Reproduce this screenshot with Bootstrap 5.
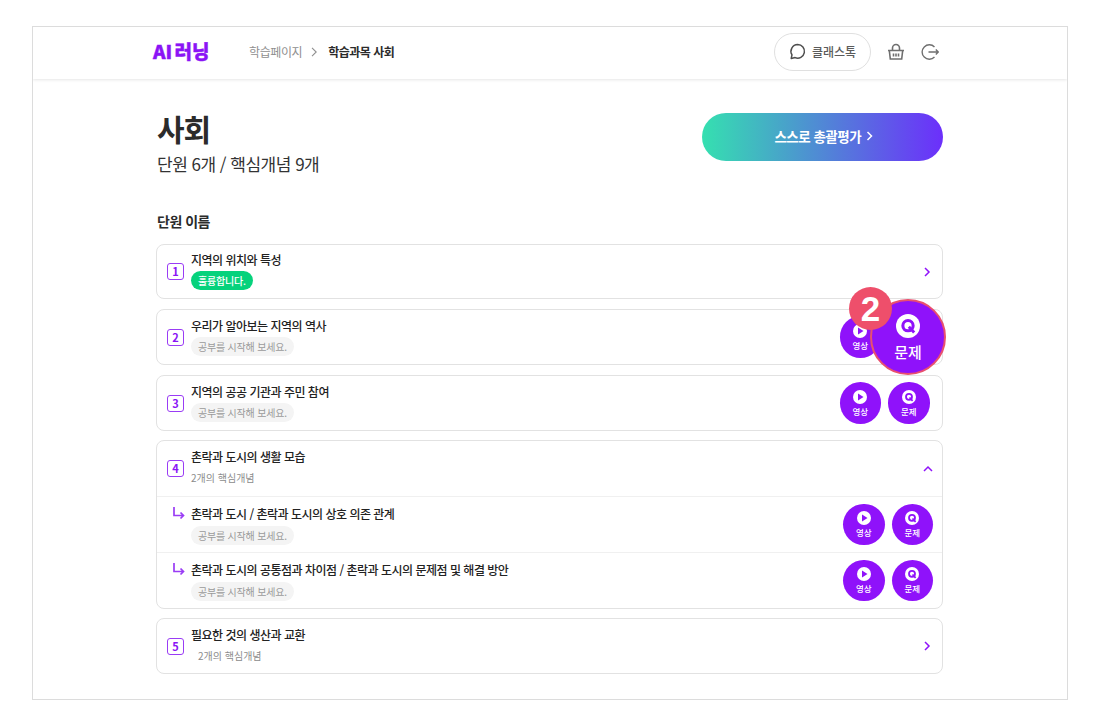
<!DOCTYPE html>
<html lang="ko">
<head>
  <meta charset="UTF-8" />
  <meta name="viewport" content="width=device-width, initial-scale=1.0"/>
  <title>AI 러닝</title>
  <link href="https://cdn.jsdelivr.net/npm/bootstrap@5.3.3/dist/css/bootstrap.min.css" rel="stylesheet"/>
  <style>
    body {
      font-family: "Noto Sans CJK KR", "Noto Sans", sans-serif;
      background: #fff;
      color: #222;
      padding: 26px 32px;
    }
    .frame {
      border: 1px solid #dcdcdc;
      height: 674px;
      overflow: hidden;
    }
    .topbar {
      height: 52px;
      padding: 0 128px 3px 120px;
      box-shadow: 0 1px 3px rgba(0, 0, 0, 0.1);
    }
    .logo {
      color: #8b14f5;
      font-size: 19px;
      font-weight: 900;
      word-spacing: -3px;
      -webkit-text-stroke: 0.4px #8b14f5;
      width: 96px;
    }
    .crumb-a { color: #8f8f8f; font-size: 12px; letter-spacing: -0.4px; }
    .crumb-b { color: #2b2b2b; font-size: 12px; font-weight: 700; letter-spacing: -0.5px; margin-left: 2px; }
    .talk-btn {
      height: 38px;
      width: 97px;
      border: 1px solid #e0e0e0;
      border-radius: 19px;
      color: #5b5b5b;
      font-size: 12px;
      font-weight: 500;
      gap: 6px;
      margin-right: 16px;
    }
    .main-area {
      padding: 34px 124px 0 123px;
    }
    .page-title {
      font-size: 30px;
      font-weight: 700;
      line-height: 30px;
      letter-spacing: -1px;
      color: #2b2b2b;
      margin: 0;
      padding-left: 1px;
    }
    .page-sub {
      font-size: 17px;
      line-height: 26px;
      letter-spacing: -0.5px;
      color: #333;
      margin-top: 8px;
      padding-left: 1px;
    }
    .grad-btn {
      width: 241.5px;
      height: 48px;
      padding: 0 0 2px 3px;
      border-radius: 24px;
      background: linear-gradient(to right, #35e0b0, #6c2ffb);
      color: #fff;
      font-size: 13.5px;
      font-weight: 700;
      letter-spacing: -0.5px;
      gap: 5px;
    }
    .sect-name {
      font-size: 14px;
      font-weight: 700;
      line-height: 20px;
      letter-spacing: -0.5px;
      margin: 34px 0 13px;
      padding-left: 1px;
      color: #2b2b2b;
    }
    .unit-box {
      border: 1px solid #e2e2e2;
      border-radius: 8px;
      margin-bottom: 10px;
      background: #fff;
    }
    .unit-box.tight { margin-bottom: 9px; }
    .unit-row {
      height: 53px;
      padding: 0 10px 0 10px;
    }
    .unit-row.tall { height: 54px; }
    .unit-row.tall.open { height: 55px; }
    .unit-row.sub {
      height: 56px;
      border-top: 1px solid #f0f0f0;
      padding-left: 14px;
    }
    .num-box {
      width: 17px;
      height: 17px;
      border: 1px solid #9a3cf5;
      border-radius: 3px;
      color: #8b14f5;
      font-size: 11px;
      font-weight: 700;
      line-height: 1;
      margin-right: 7px;
      flex: none;
    }
    .sub-arrow { width: 18px; margin-right: 2px; flex: none; align-self: flex-start; margin-top: 9px; }
    .unit-title {
      font-size: 12px;
      font-weight: 500;
      line-height: 18px;
      letter-spacing: -0.5px;
      color: #222;
      margin-top: -2px;
    }
    .sub .unit-title { margin-top: 0; }
    .pill {
      display: block;
      width: fit-content;
      height: 19px;
      line-height: 19px;
      padding: 0 7px;
      border-radius: 10px;
      font-size: 10px;
      letter-spacing: -0.2px;
      margin-top: 2px;
      background: #f4f4f4;
      color: #9a9a9a;
    }
    .sub .pill { margin-top: 3px; }
    .pill.good { background: #06d27c; color: #fff; font-weight: 500; }
    .concept { font-size: 10px; line-height: 19px; margin-top: 2px; color: #8c8c8c; }
    .concept.shift { padding-left: 7px; }
    .round-btns { gap: 7px; margin-right: 2.5px; }
    .sub .round-btns { margin-right: -1px; }
    .round-btn {
      width: 41.5px;
      height: 41.5px;
      border-radius: 50%;
      background: #8f12fa;
      color: #fff;
      font-size: 8.5px;
      font-weight: 500;
      line-height: 11px;
      gap: 2px;
    }
    .chev-r { margin-right: 1px; }
    .chev-up { margin-right: -1px; }
    .spot-wrap { position: relative; }
    .spot-btn {
      position: absolute;
      top: -11px;
      right: -4px;
      width: 76px;
      height: 76px;
      border-radius: 50%;
      background: #8f12fa;
      border: 2px solid #e9506e;
      color: #fff;
      font-size: 15px;
      font-weight: 500;
      line-height: 18px;
      gap: 5px;
    }
    .spot-num {
      position: absolute;
      top: -23px;
      right: 50px;
      width: 43px;
      height: 43px;
      border-radius: 50%;
      background: #ee4f6b;
      color: #fff;
      font-family: "Liberation Sans", sans-serif;
      font-size: 35px;
      font-weight: 700;
      line-height: 1;
    }
  </style>
</head>
<body>
  <div class="frame">

    <!-- header -->
    <div class="topbar d-flex align-items-center">
      <div class="logo">AI 러닝</div>
      <span class="crumb-a">학습페이지</span>
      <svg class="mx-2" width="8" height="10" viewBox="0 0 8 10" fill="none" stroke="#8f8f8f" stroke-width="1.1"><path d="M2 .8 6.200 5 2 9.200"/></svg>
      <span class="crumb-b">학습과목 사회</span>
      <div class="d-flex align-items-center ms-auto">
        <div class="talk-btn d-flex align-items-center justify-content-center">
          <svg width="17" height="17" viewBox="0 0 17 17" fill="none" stroke="#4e4e4e" stroke-width="1.5"><path d="M8.700 1.500a6.800 6.800 0 1 1-2.600 13.100L2.200 15.400l.8-3.500A6.800 6.800 0 0 1 8.700 1.500Z" stroke-linejoin="round"/></svg>
          <span>클래스톡</span>
        </div>
        <svg class="me-3" width="18" height="18" viewBox="0 0 18 18" fill="none" stroke="#6f6f6f" stroke-width="1.6"><path d="M1 7.500h16M2.300 7.500l1 8.500h11.400l1-8.500M5.500 7.500V5a3.500 3.500 0 0 1 7 0v2.500M6.500 10.500v3M9 10.500v3M11.500 10.500v3"/></svg>
        <svg width="18" height="18" viewBox="0 0 18 18" fill="none" stroke="#6f6f6f" stroke-width="1.4"><path d="M13.500 4A7.200 7.200 0 1 0 13.500 14M7.500 9h10M14.800 6.500 17.300 9l-2.500 2.500"/></svg>
      </div>
    </div>

    <div class="main-area">
      <div class="d-flex justify-content-between align-items-start">
        <div>
          <h1 class="page-title">사회</h1>
          <div class="page-sub">단원 6개 / 핵심개념 9개</div>
        </div>
        <div class="grad-btn d-flex align-items-center justify-content-center">
          <span>스스로 총괄평가</span>
          <svg width="7" height="10" viewBox="0 0 7 10" fill="none" stroke="#fff" stroke-width="1.5"><path d="M1.500 1 5.500 5l-4 4"/></svg>
        </div>
      </div>

      <div class="sect-name">단원 이름</div>

      <!-- 1 -->
      <div class="unit-box">
        <div class="unit-row d-flex align-items-center">
          <div class="num-box d-flex align-items-center justify-content-center">1</div>
          <div>
            <div class="unit-title">지역의 위치와 특성</div>
            <span class="pill good">훌륭합니다.</span>
          </div>
          <svg class="ms-auto chev-r" width="8" height="10" viewBox="0 0 8 10" fill="none" stroke="#8f12fa" stroke-width="1.5"><path d="M2 1l4 4-4 4"/></svg>
        </div>
      </div>

      <!-- 2 -->
      <div class="unit-box spot-wrap">
        <div class="unit-row tall d-flex align-items-center">
          <div class="num-box d-flex align-items-center justify-content-center">2</div>
          <div>
            <div class="unit-title">우리가 알아보는 지역의 역사</div>
            <span class="pill">공부를 시작해 보세요.</span>
          </div>
          <div class="round-btns d-flex ms-auto">
            <div class="round-btn d-flex flex-column align-items-center justify-content-center">
              <svg width="14" height="14" viewBox="0 0 14 14"><circle cx="7" cy="7" r="7" fill="#fff"/><path d="M5 3.500v7L10.500 7z" fill="#8f12fa"/></svg>
              <span>영상</span>
            </div>
            <div class="round-btn"></div>
          </div>
        </div>
        <div class="spot-btn d-flex flex-column align-items-center justify-content-center">
          <svg width="24" height="24" viewBox="0 0 14 14"><circle cx="7" cy="7" r="7" fill="#fff"/><circle cx="7" cy="6.800" r="3" fill="none" stroke="#8f12fa" stroke-width="1.8"/><path d="M7.500 7.500 10.600 10.800" stroke="#8f12fa" stroke-width="1.7"/></svg>
          <span>문제</span>
        </div>
        <div class="spot-num d-flex align-items-center justify-content-center">2</div>
      </div>

      <!-- 3 -->
      <div class="unit-box tight">
        <div class="unit-row tall d-flex align-items-center">
          <div class="num-box d-flex align-items-center justify-content-center">3</div>
          <div>
            <div class="unit-title">지역의 공공 기관과 주민 참여</div>
            <span class="pill">공부를 시작해 보세요.</span>
          </div>
          <div class="round-btns d-flex ms-auto">
            <div class="round-btn d-flex flex-column align-items-center justify-content-center">
              <svg width="14" height="14" viewBox="0 0 14 14"><circle cx="7" cy="7" r="7" fill="#fff"/><path d="M5 3.500v7L10.500 7z" fill="#8f12fa"/></svg>
              <span>영상</span>
            </div>
            <div class="round-btn d-flex flex-column align-items-center justify-content-center">
              <svg width="14" height="14" viewBox="0 0 14 14"><circle cx="7" cy="7" r="7" fill="#fff"/><circle cx="7" cy="6.800" r="3" fill="none" stroke="#8f12fa" stroke-width="1.8"/><path d="M7.500 7.500 10.600 10.800" stroke="#8f12fa" stroke-width="1.7"/></svg>
              <span>문제</span>
            </div>
          </div>
        </div>
      </div>

      <!-- 4 -->
      <div class="unit-box tight">
        <div class="unit-row tall open d-flex align-items-center">
          <div class="num-box d-flex align-items-center justify-content-center">4</div>
          <div>
            <div class="unit-title">촌락과 도시의 생활 모습</div>
            <div class="concept">2개의 핵심개념</div>
          </div>
          <svg class="ms-auto chev-up" width="10" height="8" viewBox="0 0 10 8" fill="none" stroke="#8f12fa" stroke-width="1.5"><path d="M1 6l4-4 4 4"/></svg>
        </div>
        <div class="unit-row sub d-flex align-items-center">
          <svg class="sub-arrow" height="14" viewBox="0 0 18 14" fill="none" stroke="#9a3cf5" stroke-width="1.7"><path d="M3 1v8.500h9M9.500 6.500l3 3-3 3"/></svg>
          <div>
            <div class="unit-title">촌락과 도시 / 촌락과 도시의 상호 의존 관계</div>
            <span class="pill">공부를 시작해 보세요.</span>
          </div>
          <div class="round-btns d-flex ms-auto">
            <div class="round-btn d-flex flex-column align-items-center justify-content-center">
              <svg width="14" height="14" viewBox="0 0 14 14"><circle cx="7" cy="7" r="7" fill="#fff"/><path d="M5 3.500v7L10.500 7z" fill="#8f12fa"/></svg>
              <span>영상</span>
            </div>
            <div class="round-btn d-flex flex-column align-items-center justify-content-center">
              <svg width="14" height="14" viewBox="0 0 14 14"><circle cx="7" cy="7" r="7" fill="#fff"/><circle cx="7" cy="6.800" r="3" fill="none" stroke="#8f12fa" stroke-width="1.8"/><path d="M7.500 7.500 10.600 10.800" stroke="#8f12fa" stroke-width="1.7"/></svg>
              <span>문제</span>
            </div>
          </div>
        </div>
        <div class="unit-row sub d-flex align-items-center">
          <svg class="sub-arrow" height="14" viewBox="0 0 18 14" fill="none" stroke="#9a3cf5" stroke-width="1.7"><path d="M3 1v8.500h9M9.500 6.500l3 3-3 3"/></svg>
          <div>
            <div class="unit-title">촌락과 도시의 공통점과 차이점 / 촌락과 도시의 문제점 및 해결 방안</div>
            <span class="pill">공부를 시작해 보세요.</span>
          </div>
          <div class="round-btns d-flex ms-auto">
            <div class="round-btn d-flex flex-column align-items-center justify-content-center">
              <svg width="14" height="14" viewBox="0 0 14 14"><circle cx="7" cy="7" r="7" fill="#fff"/><path d="M5 3.500v7L10.500 7z" fill="#8f12fa"/></svg>
              <span>영상</span>
            </div>
            <div class="round-btn d-flex flex-column align-items-center justify-content-center">
              <svg width="14" height="14" viewBox="0 0 14 14"><circle cx="7" cy="7" r="7" fill="#fff"/><circle cx="7" cy="6.800" r="3" fill="none" stroke="#8f12fa" stroke-width="1.8"/><path d="M7.500 7.500 10.600 10.800" stroke="#8f12fa" stroke-width="1.7"/></svg>
              <span>문제</span>
            </div>
          </div>
        </div>
      </div>

      <!-- 5 -->
      <div class="unit-box">
        <div class="unit-row tall d-flex align-items-center">
          <div class="num-box d-flex align-items-center justify-content-center">5</div>
          <div>
            <div class="unit-title">필요한 것의 생산과 교환</div>
            <div class="concept shift">2개의 핵심개념</div>
          </div>
          <svg class="ms-auto chev-r" width="8" height="10" viewBox="0 0 8 10" fill="none" stroke="#8f12fa" stroke-width="1.5"><path d="M2 1l4 4-4 4"/></svg>
        </div>
      </div>
    </div>
  </div>
  <script src="https://cdn.jsdelivr.net/npm/bootstrap@5.3.3/dist/js/bootstrap.bundle.min.js"></script>
</body>
</html>
